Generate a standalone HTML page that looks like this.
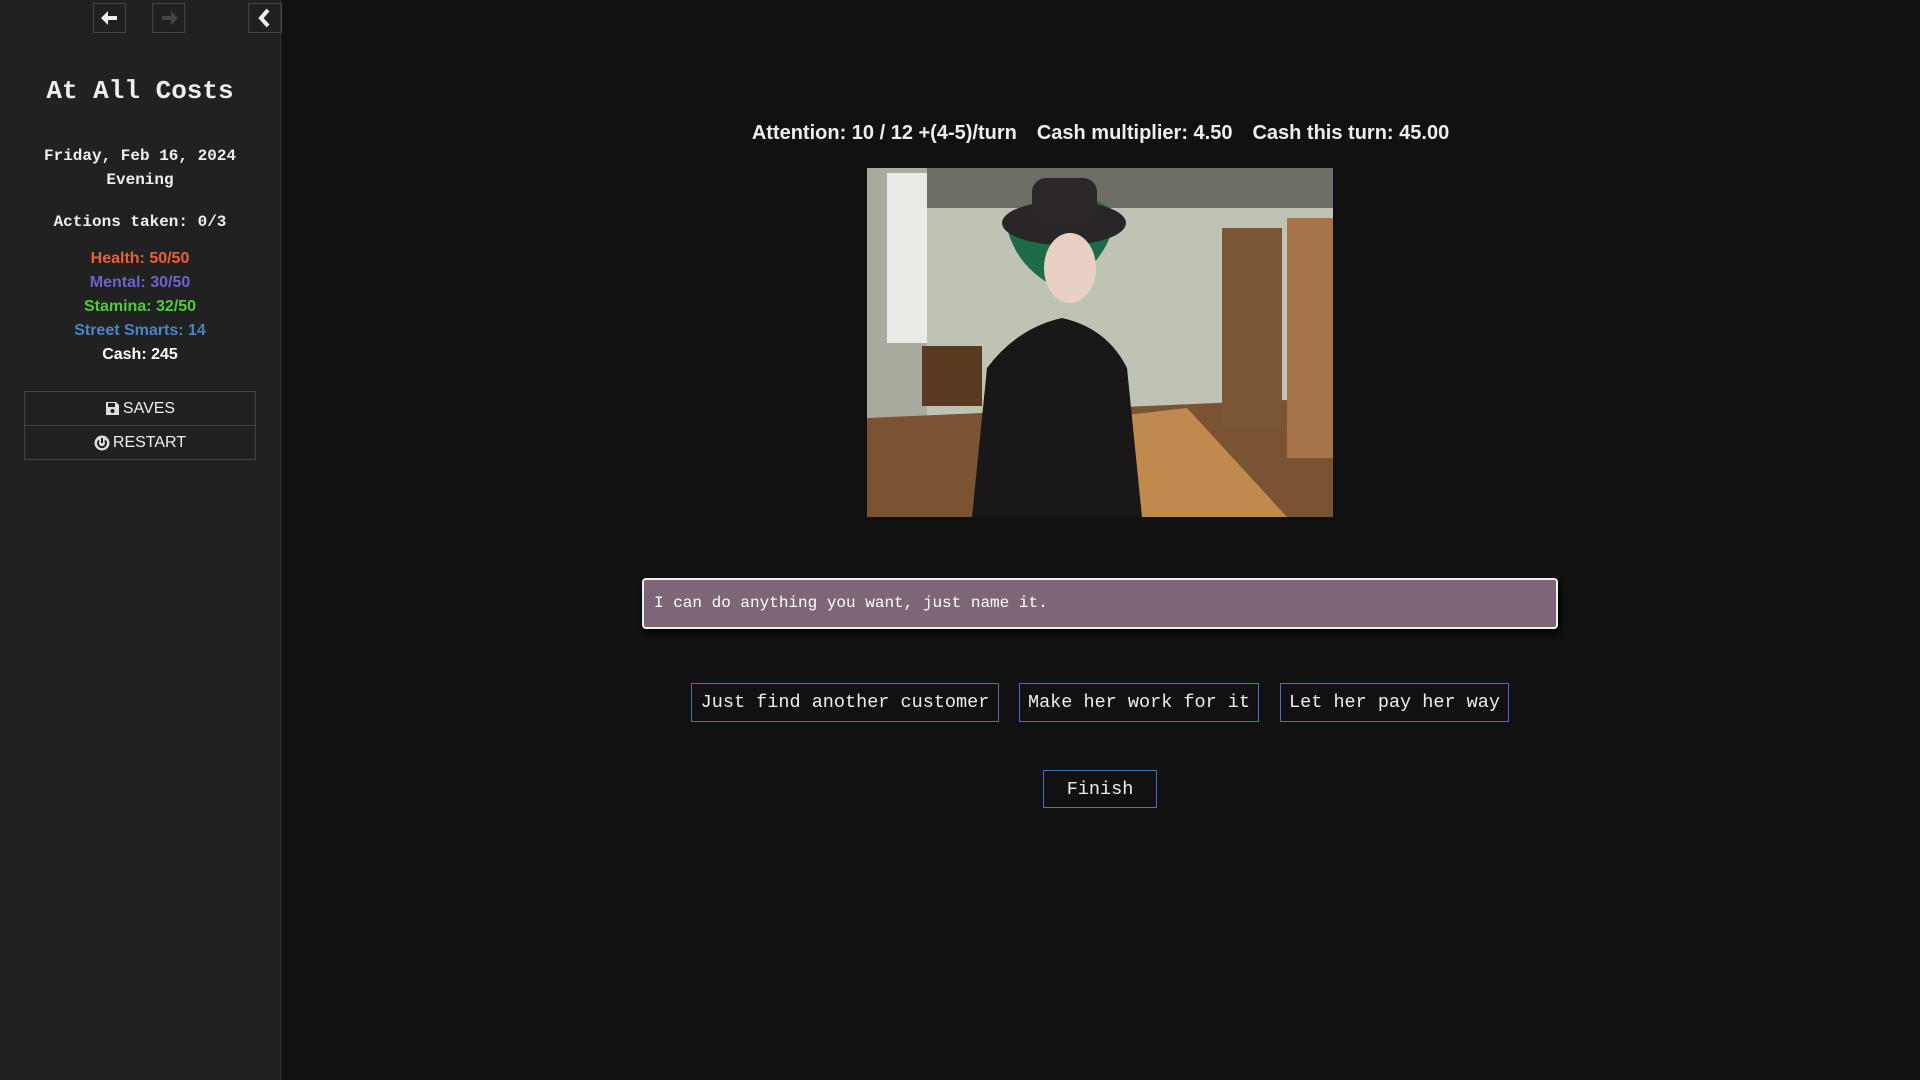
<!DOCTYPE html>
<html><head><meta charset="utf-8"><style>
body{margin:0;width:1920px;height:1080px;background:#111;overflow:hidden;font-family:"Liberation Sans",sans-serif;color:#eee;position:relative}
#sb{position:absolute;left:0;top:0;width:280px;height:1080px;background:#212121;border-right:1px solid #333}
.nb{position:absolute;top:3px;width:33px;height:30px;border:1px solid #444;box-sizing:border-box;display:flex;align-items:center;justify-content:center}
.mono{font-family:"Liberation Mono",monospace}
.c{position:absolute;left:0;width:280px;text-align:center}
.st{font-weight:bold;font-size:16px}
.mb{position:absolute;left:24px;width:232px;height:35px;border:1px solid #444;box-sizing:border-box;display:flex;align-items:center;justify-content:center;font-size:16px;color:#eee}
#hdr{position:absolute;left:281px;width:1639px;top:122px;text-align:center;font-weight:bold;font-size:20px;color:#eee}
#hdr span{margin:0 10px}
.btn{position:absolute;top:683px;height:39px;border:1px solid #4a6fc8;box-sizing:border-box;display:flex;align-items:center;justify-content:center;font-family:"Liberation Mono",monospace;font-size:18.5px;color:#eee}
</style></head><body>
<div id="sb">
<div class="nb" style="left:93px"><svg width="20" height="20" viewBox="0 0 20 20"><path d="M17 8H8V3L1 10l7 7v-5h9z" fill="#eee"/></svg></div>
<div class="nb" style="left:152px"><svg width="20" height="20" viewBox="0 0 20 20"><path d="M3 8h9V3l7 7-7 7v-5H3z" fill="#444"/></svg></div>
<div class="nb" style="left:248px;width:34px"><svg width="16" height="20" viewBox="0 0 16 20"><path d="M11 2L4 10l7 8" stroke="#eee" stroke-width="4" fill="none"/></svg></div>
<div class="c mono" style="top:76px;font-size:26px;font-weight:bold">At All Costs</div>
<div class="c mono" style="top:144px;font-size:16px;font-weight:bold;line-height:24px">Friday, Feb 16, 2024<br>Evening</div>
<div class="c mono" style="top:213px;font-size:16px;font-weight:bold">Actions taken: 0/3</div>
<div class="c st" style="top:250px;color:#e8603a">Health: 50/50</div>
<div class="c st" style="top:274px;color:#6a64cc">Mental: 30/50</div>
<div class="c st" style="top:298px;color:#4fcc3c">Stamina: 32/50</div>
<div class="c st" style="top:322px;color:#4a84c4">Street Smarts: 14</div>
<div class="c st" style="top:346px;color:#fff">Cash: 245</div>
<div class="mb" style="top:391px"><svg width="15" height="15" viewBox="0 0 15 15" style="margin-right:3px"><path d="M1 1h10l3 3v10H1z" fill="#ddd"/><rect x="3" y="2" width="7" height="4" fill="#222"/><circle cx="7.5" cy="10" r="2" fill="#222"/></svg>SAVES</div>
<div class="mb" style="top:425px"><svg width="16" height="16" viewBox="0 0 16 16" style="margin-right:3px"><circle cx="8" cy="8" r="7.5" fill="#ddd"/><path d="M5 5.5a4 4 0 1 0 6 0" stroke="#222" stroke-width="2" fill="none"/><path d="M8 3v5" stroke="#222" stroke-width="2"/></svg>RESTART</div>
</div>
<div id="hdr"><span>Attention: 10 / 12 +(4-5)/turn</span><span>Cash multiplier: 4.50</span><span>Cash this turn: 45.00</span></div>
<svg style="position:absolute;left:867px;top:168px" width="466" height="349" viewBox="0 0 466 349">
<rect width="466" height="349" fill="#bfc3b4"/>
<polygon points="0,0 466,0 466,40 0,40" fill="#6e6d66"/>
<rect x="0" y="0" width="60" height="349" fill="#a9ab9e"/>
<rect x="20" y="5" width="40" height="170" fill="#e9ece6"/>
<polygon points="0,250 466,230 466,349 0,349" fill="#7a5333"/>
<polygon points="150,260 320,240 420,349 160,349" fill="#c08a4e"/>
<rect x="55" y="178" width="60" height="60" fill="#5a3a22"/>
<rect x="355" y="60" width="60" height="200" fill="#7a5636"/>
<rect x="420" y="50" width="46" height="240" fill="#a57448"/>
<path d="M140 60 Q190 0 250 45 Q240 100 190 120 Q150 100 140 60z" fill="#1e6b4a"/>
<ellipse cx="197" cy="55" rx="62" ry="22" fill="#2a2628"/>
<rect x="165" y="10" width="65" height="45" rx="14" fill="#2b2729"/>
<ellipse cx="203" cy="100" rx="26" ry="35" fill="#e8d1c4"/>
<path d="M105 349 L120 200 Q150 160 195 150 Q240 160 260 200 L275 349z" fill="#1a1719"/>
</svg>
<div style="position:absolute;left:642px;top:578px;width:916px;height:51px;box-sizing:border-box;background:#7e6677;border:2px solid #eee;border-radius:4px;box-shadow:2px 4px 6px #000;font-family:'Liberation Mono',monospace;font-size:16px;color:#fff;padding:0 10px;line-height:47px">I can do anything you want, just name it.</div>
<div class="btn" style="left:691px;width:308px">Just find another customer</div>
<div class="btn" style="left:1019px;width:240px">Make her work for it</div>
<div class="btn" style="left:1280px;width:229px">Let her pay her way</div>
<div class="btn" style="left:1043px;width:114px;top:770px;height:38px">Finish</div>
</body></html>
